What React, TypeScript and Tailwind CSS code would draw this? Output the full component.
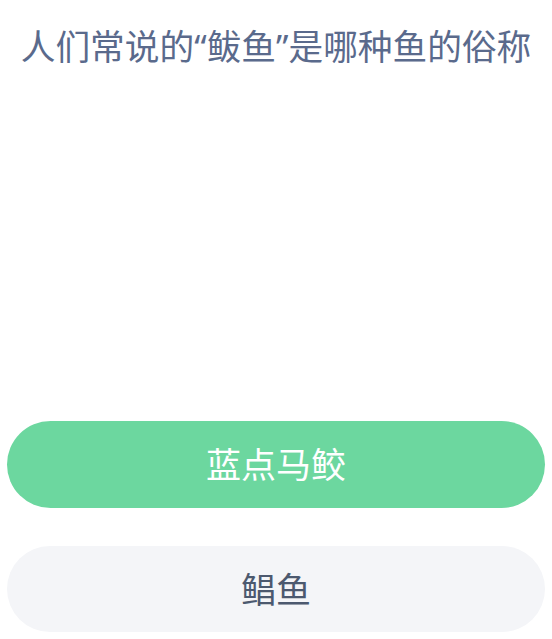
import * as React from "react";

const font = { fontFamily: '"Noto Sans", "Noto Sans CJK SC", sans-serif' };

type OptionProps = {
    label: string;
    selected?: boolean;
};

const Option: React.FC<OptionProps> = ({ label, selected }) => (
    <button
        className={
            selected
                ? "w-full h-[87px] rounded-full bg-[#6cd79f] text-white text-[35px] leading-none flex items-center justify-center"
                : "w-full h-[86px] rounded-full bg-[#f4f5f8] text-[#4c596f] text-[35px] leading-none flex items-center justify-center"
        }
    >
        {label}
    </button>
);

export default function App() {
    return (
        <div className="w-[552px] h-[639px] bg-white flex flex-col overflow-hidden" style={font}>
            <h1 className="pt-[25px] text-center text-[34.7px] leading-[44px] text-[#5a6a8c] whitespace-nowrap">
                人们常说的“鲅鱼”是哪种鱼的俗称
            </h1>
            <div className="flex-1" />
            <div className="flex flex-col gap-[38px] pl-[7px] pr-[7px] pb-[7px]">
                <Option label="蓝点马鲛" selected />
                <Option label="鲳鱼" />
            </div>
        </div>
    );
}
